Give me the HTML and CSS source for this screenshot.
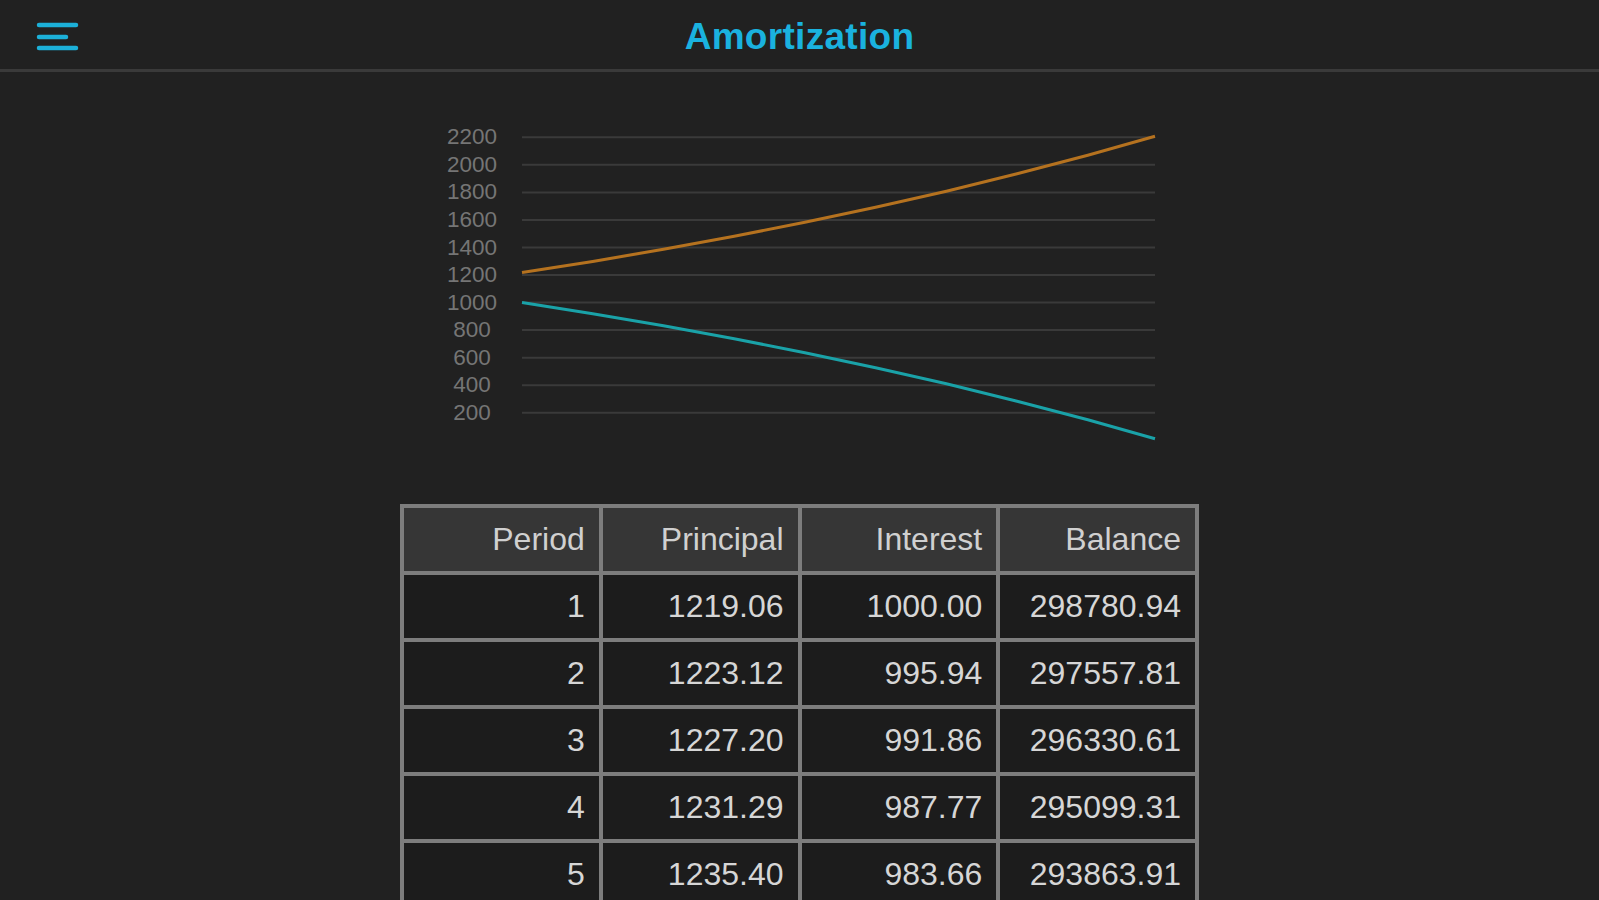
FILE: index.html
```html
<!DOCTYPE html>
<html lang="en">
<head>
<meta charset="utf-8">
<title>Amortization</title>
<link rel="stylesheet" href="styles.css">
</head>
<body>
<div class="page">
  <header class="topbar">
    <div class="menu">
      <svg class="menu-icon" width="44" height="32" viewBox="0 0 44 32">
        <line x1="3" y1="4" x2="40" y2="4"/>
        <line x1="3" y1="16" x2="30" y2="16"/>
        <line x1="3" y1="27" x2="40" y2="27"/>
      </svg>
    </div>
    <h1 class="title">Amortization</h1>
    <div></div>
  </header>

  <main class="content">
    <div class="chart">
      <svg width="740" height="350" viewBox="0 0 740 350">
        <g class="grid">
          <line x1="92" y1="27.3" x2="725" y2="27.3"/>
          <line x1="92" y1="54.8" x2="725" y2="54.8"/>
          <line x1="92" y1="82.4" x2="725" y2="82.4"/>
          <line x1="92" y1="109.9" x2="725" y2="109.9"/>
          <line x1="92" y1="137.5" x2="725" y2="137.5"/>
          <line x1="92" y1="165.0" x2="725" y2="165.0"/>
          <line x1="92" y1="192.6" x2="725" y2="192.6"/>
          <line x1="92" y1="220.1" x2="725" y2="220.1"/>
          <line x1="92" y1="247.7" x2="725" y2="247.7"/>
          <line x1="92" y1="275.2" x2="725" y2="275.2"/>
          <line x1="92" y1="302.8" x2="725" y2="302.8"/>
        </g>
        <g class="labels">
          <text x="42" y="34.3">2200</text>
          <text x="42" y="61.8">2000</text>
          <text x="42" y="89.4">1800</text>
          <text x="42" y="116.9">1600</text>
          <text x="42" y="144.5">1400</text>
          <text x="42" y="172.0">1200</text>
          <text x="42" y="199.6">1000</text>
          <text x="42" y="227.1">800</text>
          <text x="42" y="254.7">600</text>
          <text x="42" y="282.2">400</text>
          <text x="42" y="309.8">200</text>
        </g>
        <polyline class="principal" points="92,162.4 162.7,151.4 233.5,139.3 304.2,126.3 374.9,112.3 445.6,97.3 516.4,81.2 587.1,63.8 657.8,45.2 725,26.2"/>
        <polyline class="interest" points="92,192.6 162.7,203.7 233.5,215.7 304.2,228.7 374.9,242.7 445.6,257.7 516.4,273.8 587.1,291.2 657.8,309.8 725,328.8"/>
      </svg>
    </div>

    <table class="schedule">
      <thead>
        <tr><th>Period</th><th>Principal</th><th>Interest</th><th>Balance</th></tr>
      </thead>
      <tbody>
        <tr><td>1</td><td>1219.06</td><td>1000.00</td><td>298780.94</td></tr>
        <tr><td>2</td><td>1223.12</td><td>995.94</td><td>297557.81</td></tr>
        <tr><td>3</td><td>1227.20</td><td>991.86</td><td>296330.61</td></tr>
        <tr><td>4</td><td>1231.29</td><td>987.77</td><td>295099.31</td></tr>
        <tr><td>5</td><td>1235.40</td><td>983.66</td><td>293863.91</td></tr>
        <tr><td>6</td><td>1239.52</td><td>979.54</td><td>292624.39</td></tr>
      </tbody>
    </table>
  </main>
</div>
</body>
</html>
```

FILE: styles.css
```css
html, body {
  margin: 0;
  padding: 0;
  background: #212121;
}

body {
  font-family: "Liberation Sans", Arial, sans-serif;
  color: #d4d4d4;
}

.page {
  height: 100vh;
  overflow: hidden;
}

.topbar {
  display: grid;
  grid-template-columns: 1fr auto 1fr;
  align-items: center;
  height: 69px;
  border-bottom: 3px solid #3a3a3a;
  background: #212121;
}

.menu {
  padding-left: 36px;
  display: flex;
  align-items: center;
  padding-top: 5px;
}

.menu-icon line {
  stroke: #1cb0d8;
  stroke-width: 4.5;
  stroke-linecap: round;
}

.title {
  margin: 0;
  padding-top: 4px;
  font-size: 37px;
  font-weight: bold;
  color: #1ab2df;
  letter-spacing: 0.3px;
}

.content {
  display: flex;
  flex-direction: column;
  align-items: center;
}

.chart {
  margin-top: 38px;
  height: 350px;
}

.chart svg {
  display: block;
}

.grid line {
  stroke: #3a3a3a;
  stroke-width: 2;
}

.labels text {
  fill: #757575;
  font-family: "Liberation Sans", Arial, sans-serif;
  font-size: 22.5px;
  text-anchor: middle;
}

.principal {
  fill: none;
  stroke: #b5721f;
  stroke-width: 3;
  stroke-linejoin: round;
}

.interest {
  fill: none;
  stroke: #1aa2a8;
  stroke-width: 3;
  stroke-linejoin: round;
}

.schedule {
  margin-top: 44px;
  width: 799px;
  table-layout: fixed;
  border-collapse: collapse;
  border: 4px solid #7d7d7d;
}

.schedule th,
.schedule td {
  border: 4px solid #7d7d7d;
  height: 63px;
  padding: 0 14px 0 0;
  text-align: right;
  font-size: 32px;
  font-weight: normal;
  color: #d6d6d6;
}

.schedule th {
  background: #363636;
  color: #d0d0d0;
}

.schedule td {
  background: #1c1c1c;
}
```
